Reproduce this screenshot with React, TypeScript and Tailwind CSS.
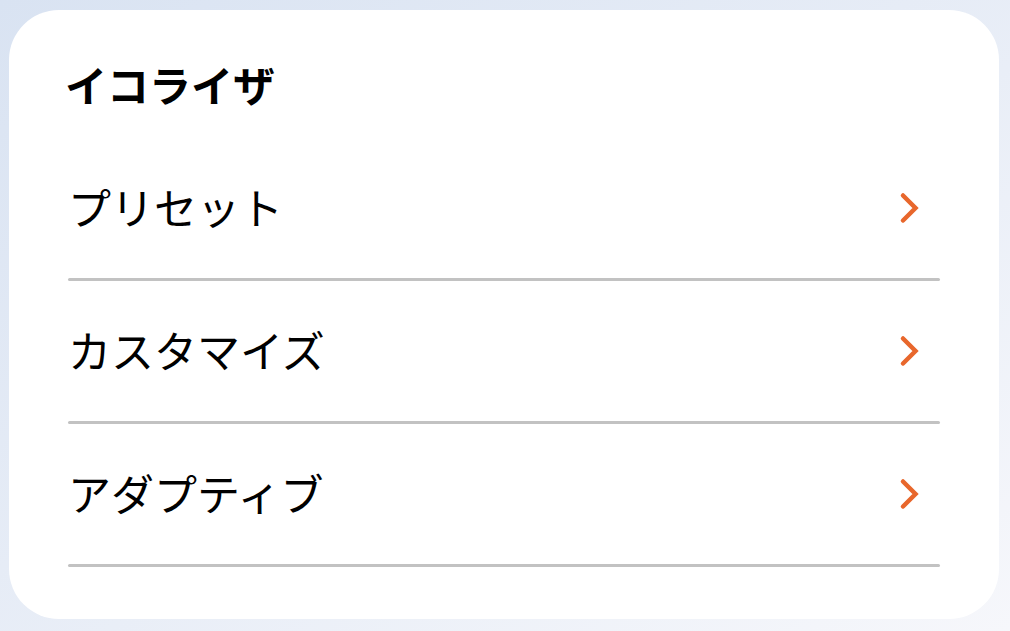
import React from 'react';

const items = ['プリセット', 'カスタマイズ', 'アダプティブ'];

const Chevron = () => (
  <svg className="w-[24px] h-[36px] mr-[18px] mt-[3px]" viewBox="0 0 24 36" fill="none">
    <polyline
      points="5,5.5 17.5,18 5,30.5"
      stroke="#e8672c"
      strokeWidth={4.5}
      strokeLinecap="round"
      strokeLinejoin="miter"
    />
  </svg>
);

export default function App() {
  return (
    <div
      className="w-[1010px] h-[631px] pt-[10px] pl-[9px] pr-[11px] pb-[12px] bg-gradient-to-br from-[#d9e3f2] to-[#f6f7fb]"
      style={{ fontFamily: '"Noto Sans CJK JP", "Noto Sans", sans-serif' }}
    >
      <div className="h-full bg-white rounded-[50px] px-[59px] flex flex-col">
        {/* タイトル */}
        <h1 className="mt-[50px] text-[42px] leading-[48px] font-bold text-black -ml-[3px]">
          イコライザ
        </h1>

        <div className="mt-[30px] flex flex-col">
          {items.map((label) => (
            <div key={label} className="flex flex-col">
              <div className="h-[140px] pb-[4px] flex items-center justify-between">
                <span className="text-[43px] leading-none text-black">{label}</span>
                <Chevron />
              </div>
              <div className="h-[3px] rounded-full bg-[#c2c2c2]" />
            </div>
          ))}
        </div>
      </div>
    </div>
  );
}
